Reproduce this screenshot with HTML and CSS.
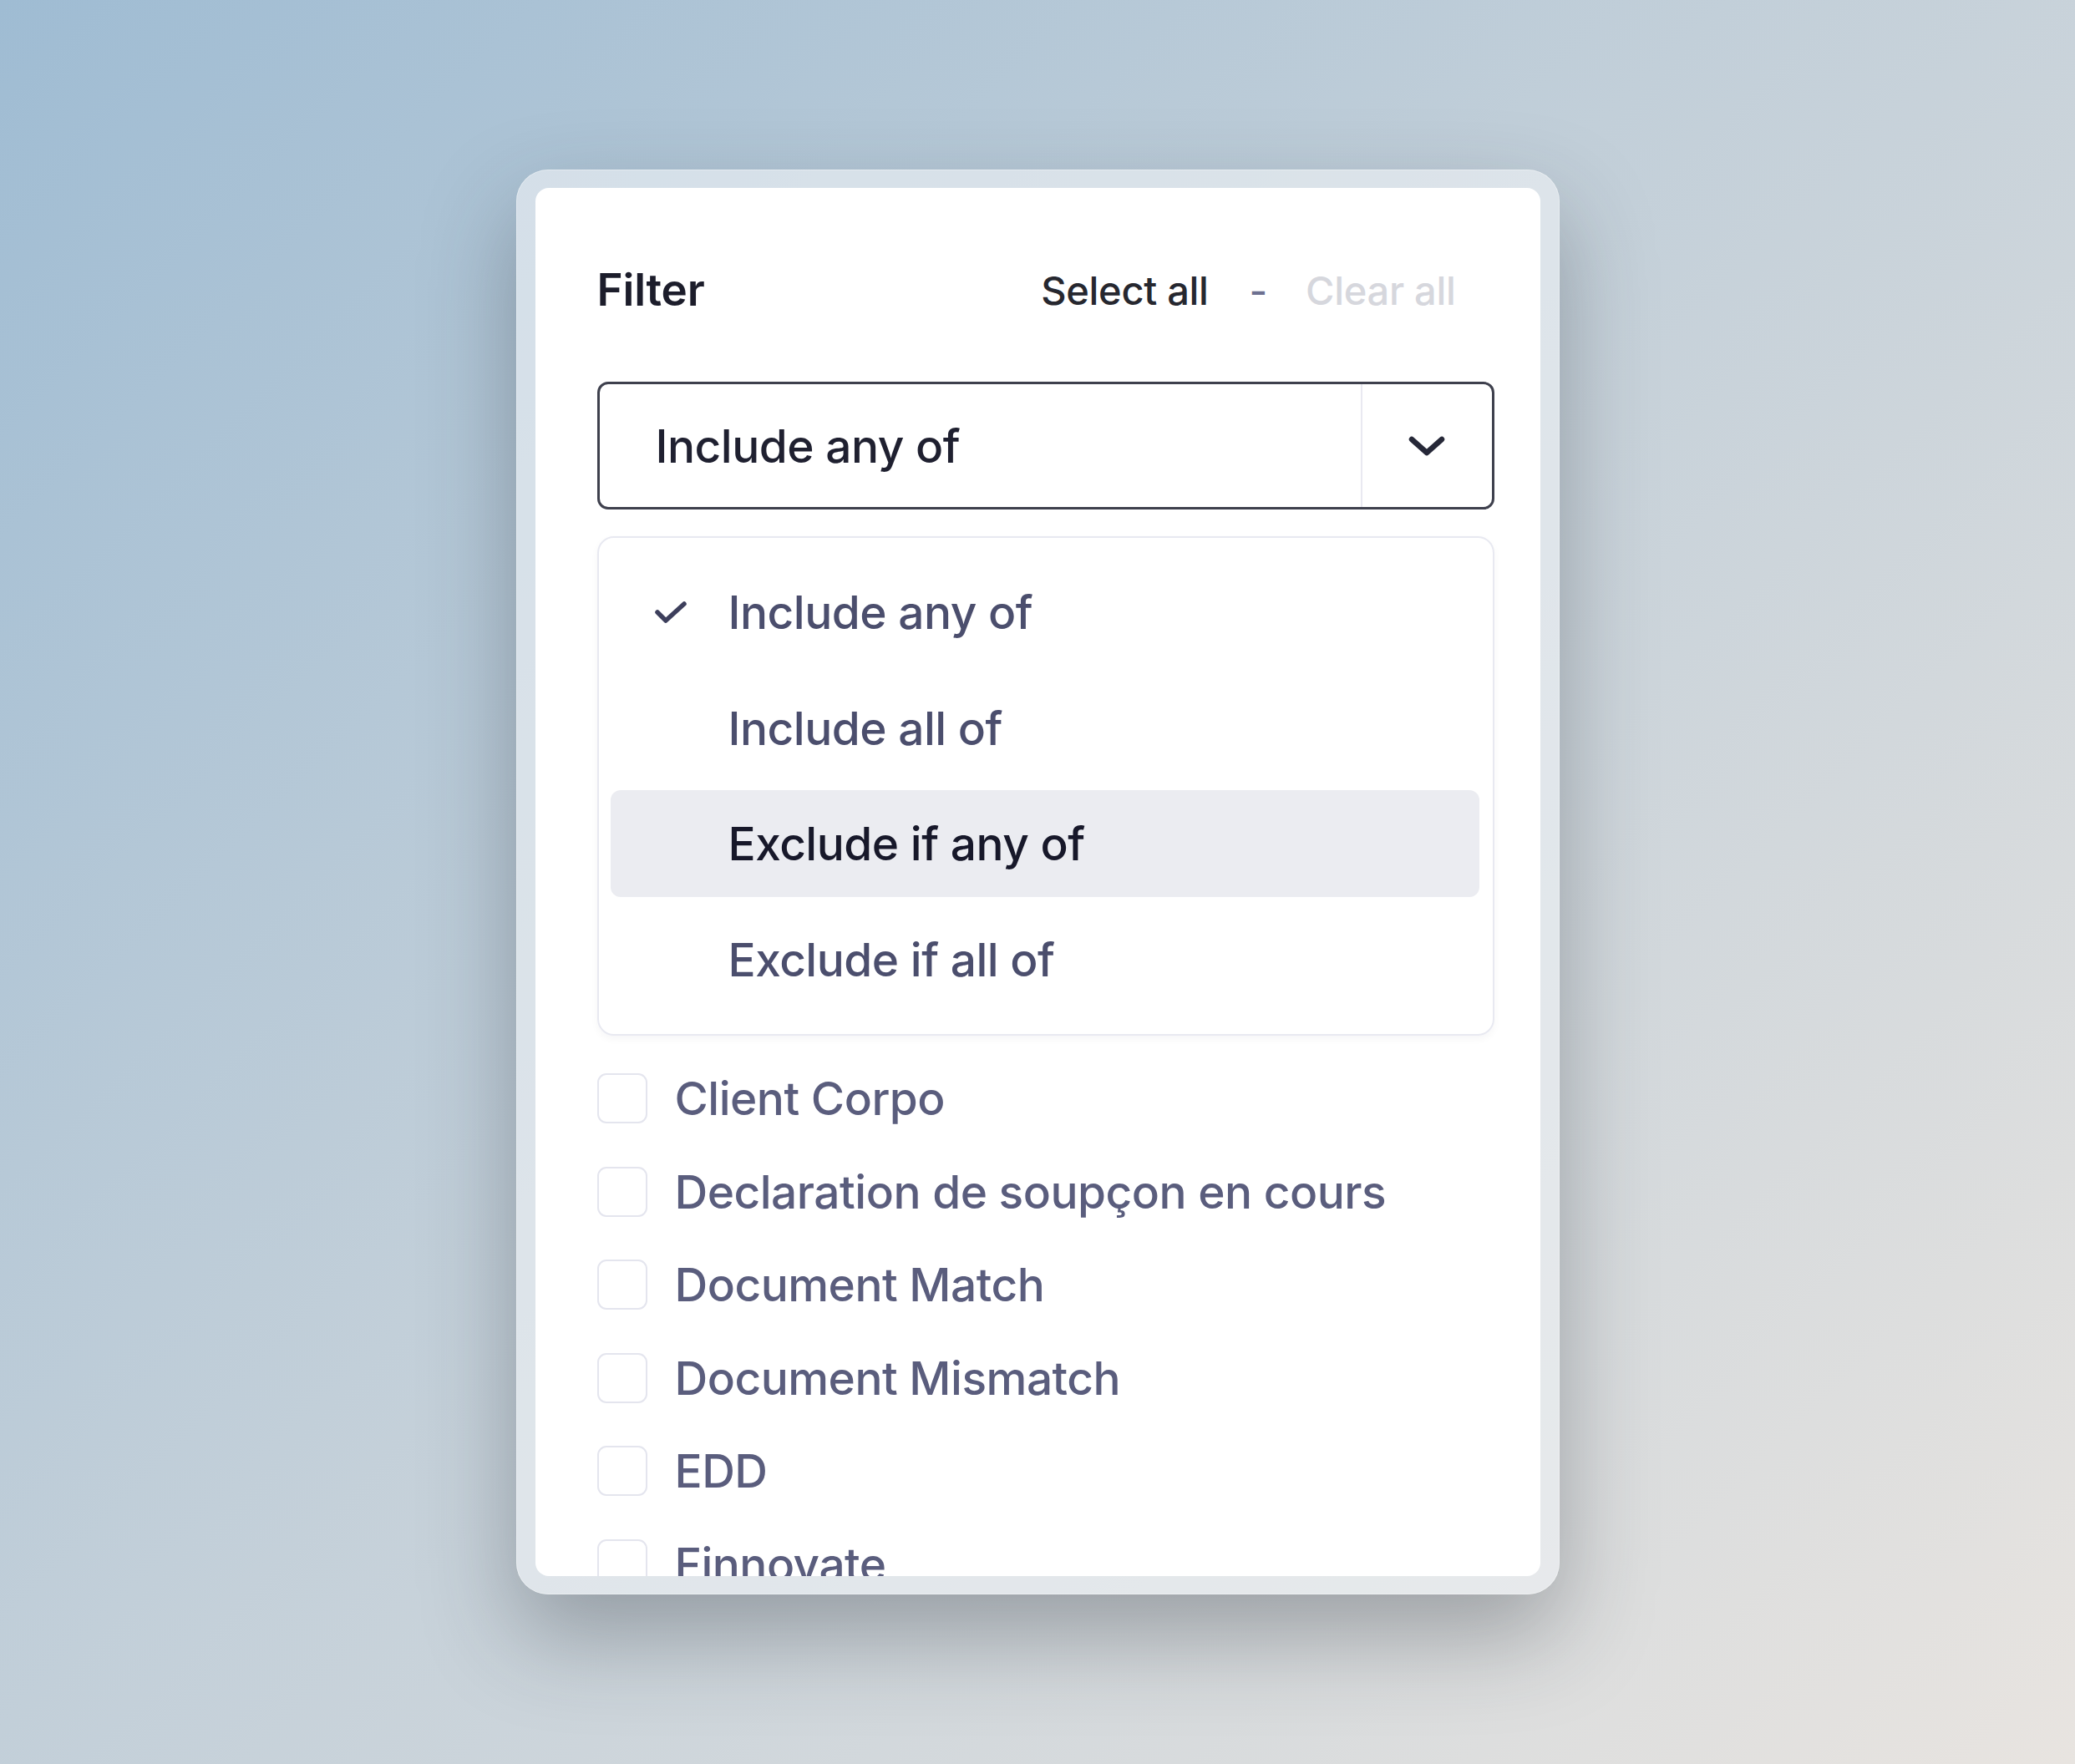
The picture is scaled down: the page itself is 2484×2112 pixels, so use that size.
FILE: index.html
```html
<!DOCTYPE html>
<html lang="en">
<head>
<meta charset="utf-8">
<title>Filter</title>
<link rel="stylesheet" href="styles.css">
</head>
<body>
<div class="stage">
  <div class="frame">
    <div class="card">
      <div class="header">
        <span class="title">Filter</span>
        <div class="actions">
          <span class="select-all">Select all</span>
          <span class="sep">-</span>
          <span class="clear-all">Clear all</span>
        </div>
      </div>

      <div class="select">
        <span class="select-value">Include any of</span>
        <span class="select-toggle">
          <svg class="chevron" viewBox="0 0 48 28" width="48" height="28"><polyline points="6,6 24,22 42,6" fill="none" stroke="#262838" stroke-width="6.5" stroke-linecap="round" stroke-linejoin="round"/></svg>
        </span>
      </div>

      <div class="menu">
        <div class="menu-item">
          <span class="check-slot"><svg viewBox="0 0 42 32" width="42" height="32"><polyline points="5,16 15,26 37,6" fill="none" stroke="#3d3f5c" stroke-width="5.5" stroke-linecap="round" stroke-linejoin="round"/></svg></span>
          <span class="menu-label">Include any of</span>
        </div>
        <div class="menu-item">
          <span class="check-slot"></span>
          <span class="menu-label">Include all of</span>
        </div>
        <div class="menu-item active">
          <span class="check-slot"></span>
          <span class="menu-label">Exclude if any of</span>
        </div>
        <div class="menu-item">
          <span class="check-slot"></span>
          <span class="menu-label">Exclude if all of</span>
        </div>
      </div>

      <ul class="options">
        <li class="option"><span class="box"></span><span class="opt-label">Client Corpo</span></li>
        <li class="option"><span class="box"></span><span class="opt-label">Declaration de soupçon en cours</span></li>
        <li class="option"><span class="box"></span><span class="opt-label">Document Match</span></li>
        <li class="option"><span class="box"></span><span class="opt-label">Document Mismatch</span></li>
        <li class="option"><span class="box"></span><span class="opt-label">EDD</span></li>
        <li class="option"><span class="box"></span><span class="opt-label">Finnovate</span></li>
      </ul>
    </div>
  </div>
</div>
</body>
</html>
```

FILE: styles.css
```css
* { box-sizing: border-box; }

html, body {
  margin: 0;
  padding: 0;
}

body {
  width: 2484px;
  height: 2112px;
  font-family: Inter, "Noto Sans", "Liberation Sans", sans-serif;
  background: linear-gradient(135deg, #9fbcd3 0%, #c2cfd9 45%, #e8e4e0 100%);
  overflow: hidden;
}

.stage {
  width: 2484px;
  height: 2112px;
  display: flex;
  align-items: center;
  justify-content: center;
}

.frame {
  width: 1249px;
  height: 1706px;
  padding: 22px 23px 22px 23px;
  border-radius: 38px;
  background: rgba(238, 242, 245, 0.6);
  box-shadow: 0 48px 110px rgba(40, 46, 56, 0.34), inset 0 0 0 1px rgba(255, 255, 255, 0.35);
}

.card {
  width: 1203px;
  height: 1662px;
  background: #ffffff;
  border-radius: 16px;
  overflow: hidden;
  padding: 88px 55px 0 74px;
}

.header {
  display: flex;
  align-items: center;
  justify-content: space-between;
  height: 68px;
  padding-right: 46px;
}

.title {
  font-size: 53px;
  font-weight: 600;
  color: #1c1d2b;
  letter-spacing: -0.2px;
}

.actions {
  display: flex;
  align-items: center;
  font-size: 47px;
  font-weight: 500;
  letter-spacing: -0.3px;
}

.select-all { color: #26272f; font-weight: 550; }
.sep { color: #6d7090; margin: 0 46px 0 49px; }
.clear-all { color: #d6d7dd; }

.select {
  margin-top: 76px;
  height: 153px;
  border: 3px solid #3e404d;
  border-radius: 13px;
  display: flex;
  align-items: stretch;
}

.select-value {
  flex: 1;
  display: flex;
  align-items: center;
  padding-left: 67px;
  font-size: 55px;
  font-weight: 500;
  color: #1f2030;
  letter-spacing: -0.5px;
}

.select-toggle {
  width: 157px;
  border-left: 2px solid #e9e9f1;
  display: flex;
  align-items: center;
  justify-content: center;
}

.chevron { display: block; }

.menu {
  margin-top: 32px;
  border: 2px solid #e8e9f1;
  border-radius: 20px;
  padding: 25px 16px 25px 14px;
  box-shadow: 0 4px 10px rgba(30, 35, 60, 0.04);
  display: flex;
  flex-direction: column;
  gap: 10.5px;
}

.menu-item {
  height: 128px;
  border-radius: 12px;
  display: flex;
  align-items: center;
  padding-left: 51px;
}

.menu-item.active {
  background: #ebecf1;
}

.check-slot {
  width: 90px;
  height: 32px;
  display: flex;
  align-items: center;
}

.check-slot svg { display: block; }

.menu-label {
  font-size: 55px;
  font-weight: 500;
  color: #4b4e6d;
  letter-spacing: -0.5px;
}

.menu-item.active .menu-label {
  color: #17182a;
}

.options {
  list-style: none;
  margin: 0;
  padding: 20px 0 0 0;
}

.option {
  height: 111.5px;
  display: flex;
  align-items: center;
  gap: 33px;
}

.box {
  width: 60px;
  height: 60px;
  border: 2px solid #e4e5ee;
  border-radius: 11px;
  flex: none;
}

.opt-label {
  font-size: 55px;
  font-weight: 500;
  color: #5a5d7d;
  letter-spacing: -0.5px;
}
```
